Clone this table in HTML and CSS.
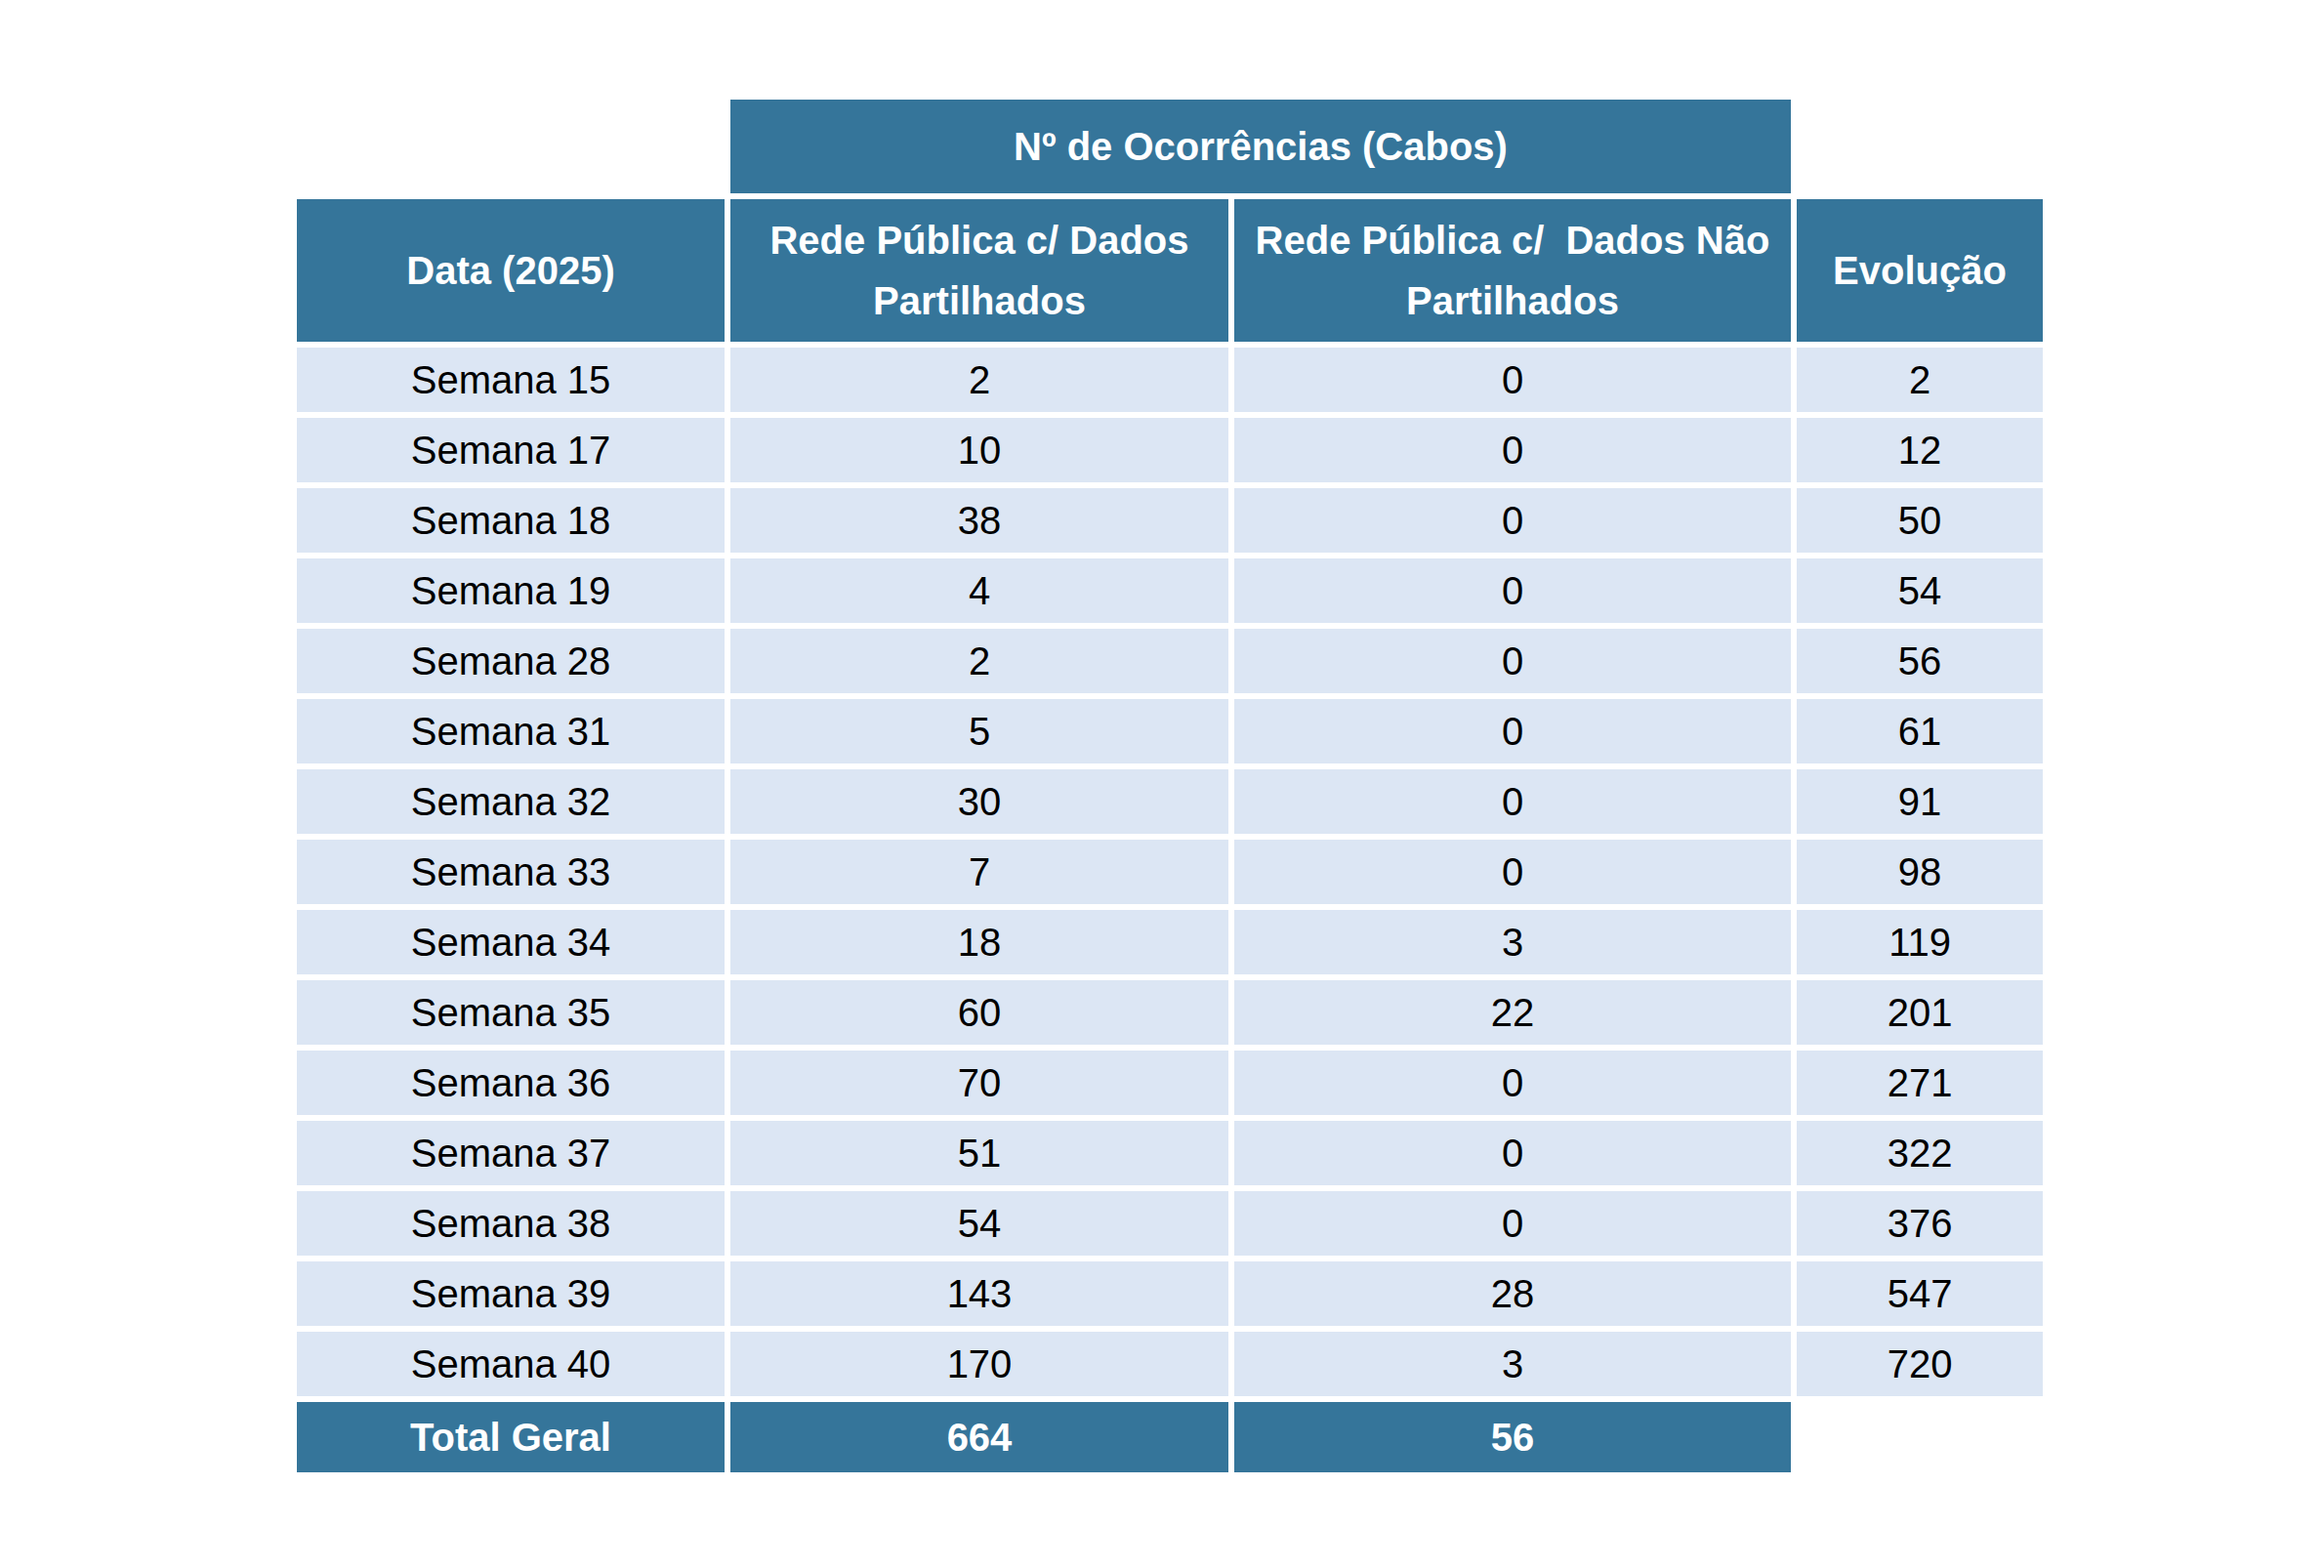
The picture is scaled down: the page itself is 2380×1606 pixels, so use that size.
FILE: index.html
```html
<!DOCTYPE html>
<html lang="pt">
<head>
<meta charset="utf-8">
<title>Nº de Ocorrências (Cabos)</title>
<link rel="stylesheet" href="styles.css">
</head>
<body>
<main class="page">
  <table class="report">
    <colgroup>
      <col class="c-date">
      <col class="c-shared">
      <col class="c-unshared">
      <col class="c-evo">
    </colgroup>
    <thead>
      <tr class="row-group">
        <td class="blank"></td>
        <th class="head" colspan="2">Nº de Ocorrências (Cabos)</th>
        <td class="blank"></td>
      </tr>
      <tr class="row-head">
        <th class="head">Data (2025)</th>
        <th class="head">Rede Pública c/ Dados<br>Partilhados</th>
        <th class="head">Rede Pública c/&nbsp; Dados Não<br>Partilhados</th>
        <th class="head">Evolução</th>
      </tr>
    </thead>
    <tbody>
      <tr class="row-data"><td>Semana 15</td><td>2</td><td>0</td><td>2</td></tr>
      <tr class="row-data"><td>Semana 17</td><td>10</td><td>0</td><td>12</td></tr>
      <tr class="row-data"><td>Semana 18</td><td>38</td><td>0</td><td>50</td></tr>
      <tr class="row-data"><td>Semana 19</td><td>4</td><td>0</td><td>54</td></tr>
      <tr class="row-data"><td>Semana 28</td><td>2</td><td>0</td><td>56</td></tr>
      <tr class="row-data"><td>Semana 31</td><td>5</td><td>0</td><td>61</td></tr>
      <tr class="row-data"><td>Semana 32</td><td>30</td><td>0</td><td>91</td></tr>
      <tr class="row-data"><td>Semana 33</td><td>7</td><td>0</td><td>98</td></tr>
      <tr class="row-data"><td>Semana 34</td><td>18</td><td>3</td><td>119</td></tr>
      <tr class="row-data"><td>Semana 35</td><td>60</td><td>22</td><td>201</td></tr>
      <tr class="row-data"><td>Semana 36</td><td>70</td><td>0</td><td>271</td></tr>
      <tr class="row-data"><td>Semana 37</td><td>51</td><td>0</td><td>322</td></tr>
      <tr class="row-data"><td>Semana 38</td><td>54</td><td>0</td><td>376</td></tr>
      <tr class="row-data"><td>Semana 39</td><td>143</td><td>28</td><td>547</td></tr>
      <tr class="row-data"><td>Semana 40</td><td>170</td><td>3</td><td>720</td></tr>
    </tbody>
    <tfoot>
      <tr class="row-total">
        <th class="head">Total Geral</th>
        <th class="head">664</th>
        <th class="head">56</th>
        <td class="blank"></td>
      </tr>
    </tfoot>
  </table>
</main>
</body>
</html>
```

FILE: styles.css
```css
html, body {
  margin: 0;
  padding: 0;
  background: #ffffff;
}

.page {
  padding: 96px 0 0 298px;
}

.report {
  border-collapse: separate;
  border-spacing: 6px;
  table-layout: fixed;
  width: 1800px;
  font-family: "Liberation Sans", Arial, sans-serif;
  font-size: 40px;
  color: #000000;
}

.c-date { width: 438px; }
.c-shared { width: 510px; }
.c-unshared { width: 570px; }
.c-evo { width: 252px; }

.report th,
.report td {
  padding: 0;
  text-align: center;
  vertical-align: middle;
}

.report .head {
  background: #35759a;
  color: #ffffff;
  font-weight: bold;
  line-height: 62px;
}

.report .blank {
  background: transparent;
}

.row-group { height: 96px; }
.row-head { height: 146px; }

.row-data { height: 66px; }
.row-data td {
  background: #dce6f4;
  line-height: 44px;
}

.row-total { height: 72px; }
```
